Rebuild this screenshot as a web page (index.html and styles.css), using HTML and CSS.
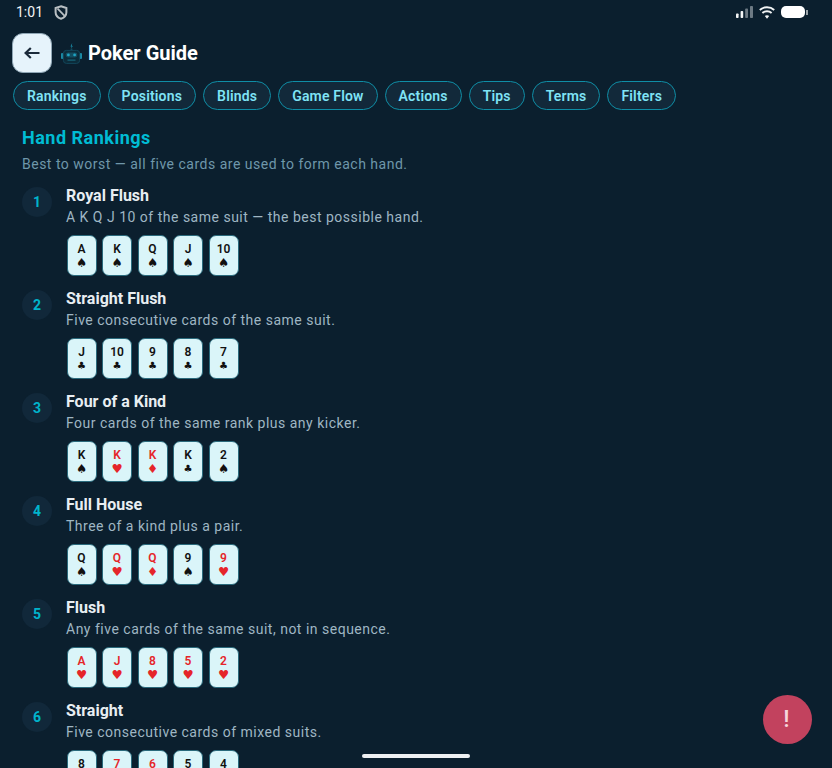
FILE: index.html
```html
<!DOCTYPE html>
<html lang="en">
<head>
  <meta charset="UTF-8" />
  <title>Poker Guide</title>
  <link rel="stylesheet" href="styles.css">
</head>
<body>
  <div class="status-bar">
    <div class="status-left">
      <span class="clock">1:01</span>
      <svg class="shield" width="14" height="15" viewBox="0 0 14 15">
        <path d="M7 1.2 L12.4 3 V7.2 C12.4 10.4 10.2 12.6 7 13.8 C3.8 12.6 1.6 10.4 1.6 7.2 V3 Z" fill="none" stroke="#b9bfc3" stroke-width="2"/>
        <path d="M3.6 3.6 L10.6 10.8" stroke="#b9bfc3" stroke-width="1.8"/>
      </svg>
    </div>
    <div class="status-right">
      <svg width="17" height="12" viewBox="0 0 17 12">
        <rect x="0" y="7.5" width="2.6" height="4.5" rx="0.8" fill="#f2f4f5"/>
        <rect x="4.6" y="5" width="2.6" height="7" rx="0.8" fill="#f2f4f5"/>
        <rect x="9.2" y="2.5" width="2.8" height="9.5" rx="0.8" fill="#6d7a84"/>
        <rect x="14" y="0" width="3" height="12" rx="0.8" fill="#6d7a84"/>
      </svg>
      <svg width="16" height="13" viewBox="0 0 16 13">
        <path d="M0.8 4 C4.8 0.4 11.2 0.4 15.2 4" fill="none" stroke="#f2f4f5" stroke-width="1.9"/>
        <path d="M3.4 7 C6 4.7 10 4.7 12.6 7" fill="none" stroke="#f2f4f5" stroke-width="1.9"/>
        <path d="M5.8 10 L8 12.8 L10.2 10 C9 8.9 7 8.9 5.8 10 Z" fill="#f2f4f5"/>
      </svg>
      <div class="battery"><div class="battery-body"></div><div class="battery-tip"></div></div>
    </div>
  </div>

  <header class="top-bar">
    <button class="back-btn">
      <svg width="16" height="12" viewBox="0 0 16 12">
        <path d="M15.5 6 H2 M6.8 1 L1.6 6 L6.8 11" fill="none" stroke="#1b2a3a" stroke-width="2.2"/>
      </svg>
    </button>
    <svg class="robot" width="21" height="21" viewBox="0 0 21 21">
      <path d="M11.2 0 L9.4 3.4 L10.6 3.6 L9.8 6 L11.8 3 L10.8 2.8 Z" fill="#1a8ba6"/>
      <rect x="9.6" y="5.6" width="1.8" height="2" fill="#134c5f"/>
      <rect x="0" y="10" width="2.4" height="6" rx="1" fill="#1a8ba6"/>
      <rect x="18.6" y="10" width="2.4" height="6" rx="1" fill="#1a8ba6"/>
      <rect x="2.4" y="7.4" width="16.2" height="13" rx="3" fill="#0c2b3a" stroke="#12465a" stroke-width="1"/>
      <rect x="4.6" y="9.4" width="11.8" height="5" rx="2.4" fill="#124d60"/>
      <circle cx="7.4" cy="11.9" r="1.4" fill="#1fa3c2"/>
      <circle cx="13.6" cy="11.9" r="1.4" fill="#1fa3c2"/>
      <rect x="6.5" y="16.4" width="8" height="1.5" fill="#155a6e"/>
    </svg>
    <h1 class="page-title">Poker Guide</h1>
  </header>

  <nav class="chips">
    <a class="chip">Rankings</a>
    <a class="chip">Positions</a>
    <a class="chip">Blinds</a>
    <a class="chip">Game Flow</a>
    <a class="chip">Actions</a>
    <a class="chip">Tips</a>
    <a class="chip">Terms</a>
    <a class="chip">Filters</a>
  </nav>

  <main class="content">
    <h2 class="section-title">Hand Rankings</h2>
    <p class="section-sub">Best to worst — all five cards are used to form each hand.</p>

    <div class="hand">
      <div class="hand-num">1</div>
      <div class="hand-body">
        <div class="hand-name">Royal Flush</div>
        <div class="hand-desc">A K Q J 10 of the same suit — the best possible hand.</div>
        <div class="cards">
          <div class="card"><span class="rank">A</span><span class="suit">♠</span></div>
          <div class="card"><span class="rank">K</span><span class="suit">♠</span></div>
          <div class="card"><span class="rank">Q</span><span class="suit">♠</span></div>
          <div class="card"><span class="rank">J</span><span class="suit">♠</span></div>
          <div class="card"><span class="rank">10</span><span class="suit">♠</span></div>
        </div>
      </div>
    </div>

    <div class="hand">
      <div class="hand-num">2</div>
      <div class="hand-body">
        <div class="hand-name">Straight Flush</div>
        <div class="hand-desc">Five consecutive cards of the same suit.</div>
        <div class="cards">
          <div class="card"><span class="rank">J</span><span class="suit club">♣</span></div>
          <div class="card"><span class="rank">10</span><span class="suit club">♣</span></div>
          <div class="card"><span class="rank">9</span><span class="suit club">♣</span></div>
          <div class="card"><span class="rank">8</span><span class="suit club">♣</span></div>
          <div class="card"><span class="rank">7</span><span class="suit club">♣</span></div>
        </div>
      </div>
    </div>

    <div class="hand">
      <div class="hand-num">3</div>
      <div class="hand-body">
        <div class="hand-name">Four of a Kind</div>
        <div class="hand-desc">Four cards of the same rank plus any kicker.</div>
        <div class="cards">
          <div class="card"><span class="rank">K</span><span class="suit">♠</span></div>
          <div class="card red"><span class="rank">K</span><span class="suit">♥</span></div>
          <div class="card red"><span class="rank">K</span><span class="suit">♦</span></div>
          <div class="card"><span class="rank">K</span><span class="suit club">♣</span></div>
          <div class="card"><span class="rank">2</span><span class="suit">♠</span></div>
        </div>
      </div>
    </div>

    <div class="hand">
      <div class="hand-num">4</div>
      <div class="hand-body">
        <div class="hand-name">Full House</div>
        <div class="hand-desc">Three of a kind plus a pair.</div>
        <div class="cards">
          <div class="card"><span class="rank">Q</span><span class="suit">♠</span></div>
          <div class="card red"><span class="rank">Q</span><span class="suit">♥</span></div>
          <div class="card red"><span class="rank">Q</span><span class="suit">♦</span></div>
          <div class="card"><span class="rank">9</span><span class="suit">♠</span></div>
          <div class="card red"><span class="rank">9</span><span class="suit">♥</span></div>
        </div>
      </div>
    </div>

    <div class="hand">
      <div class="hand-num">5</div>
      <div class="hand-body">
        <div class="hand-name">Flush</div>
        <div class="hand-desc">Any five cards of the same suit, not in sequence.</div>
        <div class="cards">
          <div class="card red"><span class="rank">A</span><span class="suit">♥</span></div>
          <div class="card red"><span class="rank">J</span><span class="suit">♥</span></div>
          <div class="card red"><span class="rank">8</span><span class="suit">♥</span></div>
          <div class="card red"><span class="rank">5</span><span class="suit">♥</span></div>
          <div class="card red"><span class="rank">2</span><span class="suit">♥</span></div>
        </div>
      </div>
    </div>

    <div class="hand">
      <div class="hand-num">6</div>
      <div class="hand-body">
        <div class="hand-name">Straight</div>
        <div class="hand-desc">Five consecutive cards of mixed suits.</div>
        <div class="cards">
          <div class="card"><span class="rank">8</span><span class="suit">♠</span></div>
          <div class="card red"><span class="rank">7</span><span class="suit">♥</span></div>
          <div class="card red"><span class="rank">6</span><span class="suit">♦</span></div>
          <div class="card"><span class="rank">5</span><span class="suit club">♣</span></div>
          <div class="card"><span class="rank">4</span><span class="suit">♠</span></div>
        </div>
      </div>
    </div>
  </main>

  <button class="fab">!</button>
  <div class="home-bar"></div>
</body>
</html>
```

FILE: styles.css
```css
html, body {
  height: 768px;
  overflow: hidden;
}

body {
  margin: 0;
  background-color: #0b1f2e;
  color: #fff;
  font-family: Roboto, "Liberation Sans", sans-serif;
  position: relative;
}

.status-bar {
  height: 24px;
  display: flex;
  justify-content: space-between;
  align-items: center;
  padding: 0 24px 0 16px;
}

.status-left {
  display: flex;
  align-items: center;
  gap: 11px;
}

.clock {
  font-size: 14px;
  color: #f2f4f5;
}

.status-right {
  display: flex;
  align-items: center;
  gap: 6px;
}

.battery {
  display: flex;
  align-items: center;
  gap: 1px;
}

.battery-body {
  width: 24px;
  height: 12px;
  border-radius: 5px;
  background-color: #fff;
}

.battery-tip {
  width: 2px;
  height: 5px;
  background-color: #9aa3a9;
}

.top-bar {
  display: flex;
  align-items: center;
  height: 40px;
  margin-top: 9px;
  padding-left: 12px;
}

.back-btn {
  width: 40px;
  height: 40px;
  padding: 0;
  display: flex;
  align-items: center;
  justify-content: center;
  background-color: #e6f3fb;
  border: 1px solid #8fa6b5;
  border-radius: 11px;
}

.robot {
  margin-left: 9px;
  margin-top: 1px;
}

.page-title {
  margin: 0 0 0 6px;
  font-size: 20px;
  font-weight: 700;
  color: #fff;
}

.chips {
  display: flex;
  gap: 7px;
  margin-top: 8px;
  padding-left: 13px;
}

.chip {
  height: 29px;
  box-sizing: border-box;
  display: flex;
  align-items: center;
  padding: 0 13px;
  font-size: 14px;
  font-weight: 600;
  letter-spacing: 0.17px;
  color: #7fe3f5;
  background-color: #12293a;
  border: 1px solid #0f8ea6;
  border-radius: 15px;
}

.content {
  padding: 17px 22px 0;
}

.section-title {
  margin: 0;
  font-size: 18px;
  line-height: 22px;
  font-weight: 700;
  letter-spacing: 0.5px;
  color: #00bcd4;
}

.section-sub {
  margin: 5px 0 0;
  font-size: 14px;
  line-height: 20px;
  letter-spacing: 0.5px;
  color: #6f97aa;
}

.hand {
  display: flex;
  gap: 14px;
  height: 103px;
}

.hand:first-of-type {
  margin-top: 11px;
}

.hand-num {
  width: 30px;
  height: 30px;
  margin-top: 2px;
  flex-shrink: 0;
  display: flex;
  align-items: center;
  justify-content: center;
  border-radius: 50%;
  background-color: #11283a;
  color: #00b4cc;
  font-size: 14px;
  font-weight: 700;
}

.hand-body {
  padding-top: 1px;
}

.hand-name {
  font-size: 16px;
  line-height: 20px;
  font-weight: 700;
  color: #e8eef2;
}

.hand-desc {
  margin-top: 1px;
  font-size: 14px;
  line-height: 20px;
  letter-spacing: 0.5px;
  color: #9fb6c3;
}

.cards {
  display: flex;
  gap: 5.5px;
  margin-top: 8px;
  padding-left: 0.5px;
}

.card {
  width: 30px;
  height: 41px;
  box-sizing: border-box;
  display: flex;
  flex-direction: column;
  align-items: center;
  justify-content: center;
  background-color: #daf5f9;
  border: 1px solid #2a6a7c;
  border-radius: 7px;
  color: #111;
}

.card.red {
  color: #e5252a;
}

.rank {
  font-size: 12px;
  line-height: 14px;
  font-weight: 600;
}

.suit {
  font-family: "DejaVu Sans", sans-serif;
  font-size: 12.5px;
  line-height: 14px;
}

.suit.club {
  font-size: 10px;
}

.fab {
  position: absolute;
  right: 20px;
  bottom: 24px;
  width: 49px;
  height: 49px;
  padding: 0 2px 2px 0;
  border: none;
  border-radius: 50%;
  background-color: #c2425e;
  color: #f6d5dc;
  font-family: Roboto, sans-serif;
  font-size: 24px;
  font-weight: 500;
}

.home-bar {
  position: absolute;
  left: 362px;
  bottom: 10px;
  width: 108px;
  height: 4px;
  border-radius: 2px;
  background-color: #eef0f2;
}
```
